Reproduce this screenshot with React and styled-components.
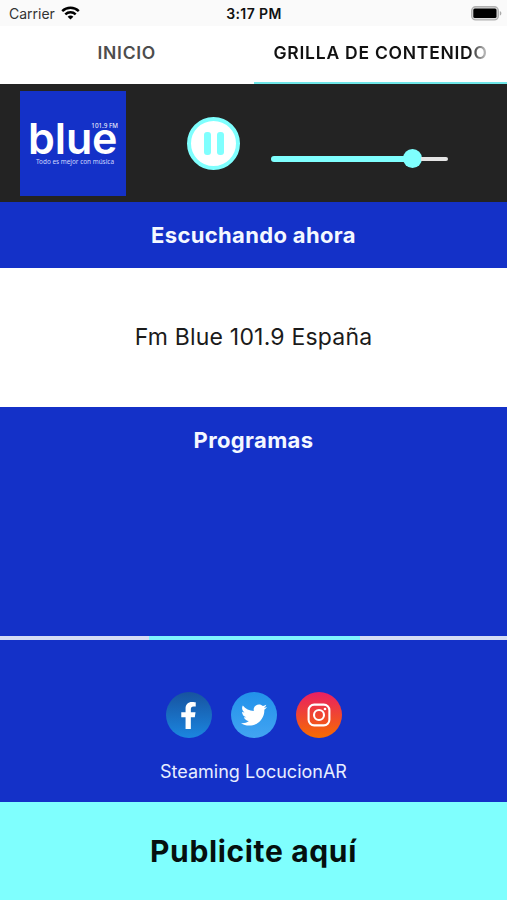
import styled, { createGlobalStyle } from 'styled-components';
import { FaFacebookF, FaTwitter } from 'react-icons/fa';

const App = () => {
    return (
        <>
            <GlobalStyle />
            <Screen>
                <StatusBar>
                    <Carrier>
                        <span>Carrier</span>
                        <WifiIcon />
                    </Carrier>
                    <Clock>3:17 PM</Clock>
                    <BatteryIcon />
                </StatusBar>

                <Tabs>
                    <Tab>INICIO</Tab>
                    <Tab $active>
                        <FadedLabel>GRILLA DE CONTENIDO</FadedLabel>
                    </Tab>
                </Tabs>

                <Player>
                    <Cover>
                        <Frequency>101.9 FM</Frequency>
                        <Brand>blue</Brand>
                        <Slogan>Todo es mejor con música</Slogan>
                    </Cover>
                    <PauseButton aria-label="Pausa">
                        <PauseBar />
                        <PauseBar />
                    </PauseButton>
                    <Volume>
                        <VolumeLevel />
                        <VolumeThumb />
                        <VolumeRest />
                    </Volume>
                </Player>

                <NowTitle>
                    <Heading>Escuchando ahora</Heading>
                </NowTitle>
                <NowPlaying>Fm Blue 101.9 España</NowPlaying>

                <Programs>
                    <Heading>Programas</Heading>
                </Programs>
                <Progress>
                    <ProgressChunk />
                </Progress>

                <Footer>
                    <Socials>
                        <Social $from="#17539f" $to="#1b86e0">
                            <FaFacebookF size={27} />
                        </Social>
                        <Social $from="#2292ea" $to="#42a4f2">
                            <FaTwitter size={26} />
                        </Social>
                        <Social $from="#e91f63" $to="#f66c00">
                            <InstagramIcon />
                        </Social>
                    </Socials>
                    <Credit>Steaming LocucionAR</Credit>
                </Footer>

                <Advert>Publicite aquí</Advert>
            </Screen>
        </>
    )
}

const WifiIcon = () => (
    <svg width="19" height="14" viewBox="0 0 19 14" fill="none" stroke="#000" strokeWidth="2.5">
        <path d="M1.2 5.1C5.9 .7 13.1 .7 17.8 5.1" />
        <path d="M4.3 8.4C7.3 5.6 11.7 5.6 14.7 8.4" />
        <path d="M9.5 13.6L6.6 10.7C8.2 9.2 10.8 9.2 12.4 10.7Z" fill="#000" stroke="none" />
    </svg>
)

const BatteryIcon = () => (
    <svg width="31" height="15" viewBox="0 0 31 15">
        <rect x="0.7" y="0.7" width="26.6" height="13.2" rx="4" fill="#ddd" stroke="#b0b0b0" strokeWidth="1.4" />
        <rect x="2.3" y="2.5" width="23.2" height="9.6" rx="1.5" fill="#000" />
        <path d="M28.8 5C30.9 5.8 30.9 8.8 28.8 9.6Z" fill="#aaa" />
    </svg>
)

const InstagramIcon = () => (
    <svg width="24" height="24" viewBox="0 0 24 24" fill="none" stroke="#fff" strokeWidth="2.1">
        <rect x="1.6" y="1.6" width="20.8" height="20.8" rx="5.6" />
        <circle cx="12" cy="12" r="5" />
        <circle cx="18" cy="6" r="1.3" fill="#fff" stroke="none" />
    </svg>
)

const GlobalStyle = createGlobalStyle`
    body {
        margin: 0;
        background: #1431c8;
    }

    * {
        box-sizing: border-box;
    }
`;

const Screen = styled.div`
    width: 507px;
    height: 900px;
    display: flex;
    flex-direction: column;
    overflow: hidden;
    font-family: Inter, "Liberation Sans", sans-serif;
    background: #1431c8;
`;

const StatusBar = styled.div`
    height: 26px;
    display: grid;
    grid-template-columns: 1fr auto 1fr;
    align-items: center;
    padding: 1px 5px 0 9px;
    background: #fafafa;
    color: #111;
    font-size: 14px;

    > svg {
        justify-self: end;
        margin-top: -1px;
    }
`;

const Carrier = styled.div`
    display: flex;
    align-items: center;
    gap: 6px;
    color: #333;

    svg {
        margin-top: -2px;
    }
`;

const Clock = styled.div`
    margin-right: 3px;
    font-weight: 600;
    font-size: 14px;
    letter-spacing: 0.4px;
`;

const Tabs = styled.div`
    height: 58px;
    display: grid;
    grid-template-columns: 1fr 1fr;
    background: #fff;
`;

const Tab = styled.div`
    display: flex;
    align-items: center;
    justify-content: center;
    padding: ${props => props.$active ? '0 19px 3px 20px' : '0 0 3px'};
    border-bottom: 2px solid ${props => props.$active ? '#6ee6e8' : '#fff'};
    color: ${props => props.$active ? '#111' : '#4d4d4d'};
    font-size: 17.5px;
    font-weight: 600;
    letter-spacing: 0.75px;
    white-space: nowrap;
`;

const FadedLabel = styled.span`
    width: 100%;
    overflow: hidden;
    mask-image: linear-gradient(to right, #000 91%, transparent 102%);
`;

const Player = styled.div`
    height: 118px;
    display: flex;
    align-items: center;
    padding-left: 20px;
    background: #232323;
`;

const Cover = styled.div`
    width: 106px;
    height: 105px;
    display: flex;
    flex-direction: column;
    margin-top: 1px;
    padding: 31px 8px 0;
    background: #1431c8;
    color: #fff;
`;

const Frequency = styled.div`
    height: 6px;
    align-self: flex-end;
    font: 6.3px/7px "Noto Sans", sans-serif;
    white-space: nowrap;
`;

const Brand = styled.div`
    height: 28px;
    margin-top: -7px;
    font-size: 43px;
    font-weight: 600;
    line-height: 34px;
    letter-spacing: -0.1px;
`;

const Slogan = styled.div`
    margin: 9px 0 0 8px;
    color: #cfd8ff;
    font: 6.4px/8px "Noto Sans", sans-serif;
    white-space: nowrap;
`;

const PauseButton = styled.button`
    width: 53px;
    height: 53px;
    display: flex;
    align-items: center;
    justify-content: center;
    gap: 6px;
    margin-left: 61px;
    padding: 0;
    border: 4px solid #7ffffe;
    border-radius: 50%;
    background: #fff;
`;

const PauseBar = styled.span`
    width: 7px;
    height: 23px;
    border-radius: 3px;
    background: #7ffffe;
`;

const Volume = styled.div`
    width: 177px;
    display: flex;
    align-items: center;
    margin: 31px 0 0 31px;
`;

const VolumeLevel = styled.div`
    width: 133px;
    height: 6px;
    border-radius: 3px 0 0 3px;
    background: #7ffffe;
`;

const VolumeThumb = styled.div`
    width: 19px;
    height: 19px;
    margin-left: -1px;
    border-radius: 50%;
    background: #7ffffe;
`;

const VolumeRest = styled.div`
    flex: 1;
    height: 4px;
    margin-left: -1px;
    border-radius: 0 2px 2px 0;
    background: #e4e4e4;
`;

const NowTitle = styled.div`
    height: 66px;
    display: flex;
    align-items: center;
    justify-content: center;
`;

const Heading = styled.h2`
    margin: 0;
    color: #f4f8ff;
    font-size: 22px;
    font-weight: 700;
    line-height: 28px;
    letter-spacing: 0.35px;
`;

const NowPlaying = styled.div`
    height: 139px;
    display: flex;
    align-items: center;
    justify-content: center;
    padding-bottom: 2px;
    background: #fff;
    color: #1b1b1b;
    font-size: 23px;
    letter-spacing: 0.2px;
`;

const Programs = styled.div`
    height: 229px;
    display: flex;
    justify-content: center;
    padding-top: 19px;
`;

const Progress = styled.div`
    height: 4px;
    padding-left: 149px;
    background: #d5dcf5;
`;

const ProgressChunk = styled.div`
    width: 211px;
    height: 4px;
    background: #7ff4fd;
`;

const Footer = styled.div`
    height: 162px;
    display: flex;
    flex-direction: column;
    align-items: center;
    padding-top: 52px;
`;

const Socials = styled.div`
    display: flex;
    gap: 19px;
`;

const Social = styled.div`
    width: 46px;
    height: 46px;
    display: flex;
    align-items: center;
    justify-content: center;
    border-radius: 50%;
    background: linear-gradient(${props => props.$from}, ${props => props.$to});
    color: #fff;
`;

const Credit = styled.div`
    margin-top: 23px;
    color: #e8eeff;
    font-size: 18px;
    line-height: 22px;
`;

const Advert = styled.div`
    height: 98px;
    display: flex;
    align-items: center;
    justify-content: center;
    background: #7ffffe;
    color: #05100f;
    font-size: 30px;
    font-weight: 700;
    letter-spacing: 0.65px;
`;

export default App;
